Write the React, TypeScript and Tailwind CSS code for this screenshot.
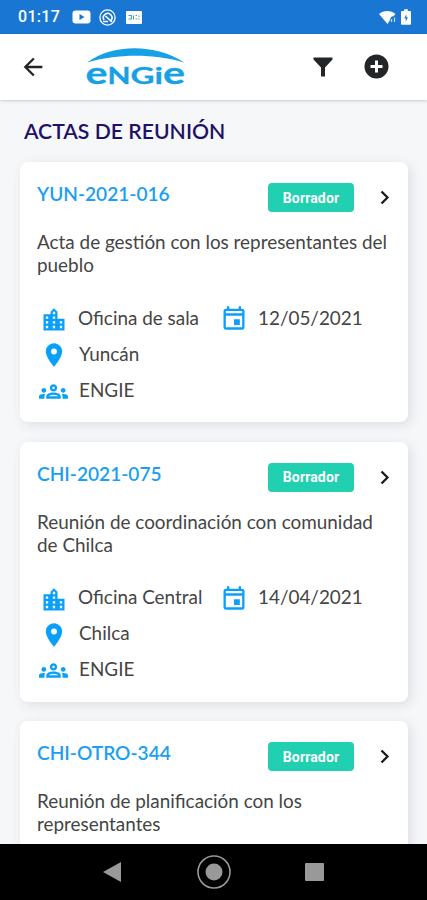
import type { ReactNode } from 'react'
import { MdArrowBack, MdLocationCity, MdLocationOn, MdOutlineEvent, MdOutlineGroups } from 'react-icons/md'

interface Acta {
  code: string
  description: string
  details?: {
    office: string
    date: string
    place: string
    company: string
  }
}

const actas: Acta[] = [
  {
    code: 'YUN-2021-016',
    description: 'Acta de gestión con los representantes del pueblo',
    details: { office: 'Oficina de sala', date: '12/05/2021', place: 'Yuncán', company: 'ENGIE' },
  },
  {
    code: 'CHI-2021-075',
    description: 'Reunión de coordinación con comunidad de Chilca',
    details: { office: 'Oficina Central', date: '14/04/2021', place: 'Chilca', company: 'ENGIE' },
  },
  {
    code: 'CHI-OTRO-344',
    description: 'Reunión de planificación con los representantes',
  },
]

function StatusBar() {
  return (
    <div className="flex h-[34px] shrink-0 items-center bg-[#1976d2] pl-[18px] pr-[16px] text-white">
      <span className="w-[54px] font-[Roboto,sans-serif] text-[16px] font-medium tracking-[0.3px]">01:17</span>
      <svg width="19" height="14" viewBox="0 0 19 14">
        <rect x="0.5" y="0.5" width="18" height="13" rx="3" fill="white" />
        <path d="M7.5 4v6l5-3z" fill="#1976d2" />
      </svg>
      <svg className="ml-[8px]" width="17" height="17" viewBox="0 0 17 17" fill="none" stroke="white">
        <circle cx="8.5" cy="8.5" r="7.600" strokeWidth="1.300" />
        <path d="M12 11.500A4.300 4.300 0 1 0 5 11M6.500 7l6.500 6M4 12.500h5" strokeWidth="1.600" />
      </svg>
      <svg className="ml-[10px]" width="16" height="13" viewBox="0 0 16 13">
        <rect width="16" height="13" rx="1" fill="white" />
        <path
          d="M2.500 4.500h3v3.500h-3M7.500 4.500v4M9.500 4.500h1.500M9.500 8h1.500M13 4.500v1.500M13 7.200v1.300"
          stroke="#1976d2"
          strokeOpacity="0.8"
          fill="none"
        />
      </svg>
      <svg className="ml-auto" width="17" height="15" viewBox="0 0 17 15">
        <path d="M0 4C4.500 0 12 0 16.500 4L14.500 6.300C12.500 6 11.300 7.500 11 10L8.500 14z" fill="white" />
        <path d="M12.500 12V9M15.500 12V7.500" stroke="white" strokeOpacity="0.7" strokeWidth="1.300" />
      </svg>
      <svg className="ml-[5px]" width="10" height="16" viewBox="0 0 11 17">
        <path d="M3.500 0h4v2H10q1 0 1 1v13q0 1-1 1H1q-1 0-1-1V3q0-1 1-1h2.500z" fill="white" />
        <path d="M6 5.500L3.500 10h1.700v3.500L7.700 9H6z" fill="#1976d2" />
      </svg>
    </div>
  )
}

// Lowercase letters are set larger so that they reach the height of the capitals
const logoLetters = [
  { char: 'e', x: 0.5, width: 22, size: 30 },
  { char: 'N', x: 22.5, width: 23, size: 22.5 },
  { char: 'G', x: 45.5, width: 24, size: 22.5 },
  { char: 'i', x: 69.5, width: 8.5, size: 22.5 },
  { char: 'e', x: 78, width: 22, size: 30 },
]

function Logo() {
  return (
    <svg className="ml-[38px]" width="102" height="48" viewBox="0 -4 102 48">
      <path d="M2 15.500C28-3.500 70-3.500 99.500 15.500C70 6.500 32 6.500 2 15.500z" fill="#16a0e6" />
      {logoLetters.map((l, idx) => (
        <text
          key={idx}
          x={l.x}
          y="36.500"
          fontSize={l.size}
          textLength={l.width}
          lengthAdjust="spacingAndGlyphs"
          fill="#16a0e6"
          stroke="#16a0e6"
          strokeWidth="0.3"
          className="font-[Lato,sans-serif] font-bold"
        >
          {l.char}
        </text>
      ))}
    </svg>
  )
}

function Header() {
  return (
    <header className="z-10 flex h-[66px] shrink-0 items-center bg-white pl-[19px] pr-[38px] text-[#222629] shadow-[0_1px_3px_rgba(0,0,0,0.18)]">
      <MdArrowBack size={28} />
      <Logo />
      <svg className="ml-auto" width="20" height="20" viewBox="0 0 20 20" fill="currentColor">
        <path d="M0.500 0.500h19v2L12 10.500v9H8v-9L0.500 2.500z" />
      </svg>
      <svg className="mb-[2px] ml-[31px]" width="25" height="25" viewBox="0 0 25 25">
        <circle cx="12.500" cy="12.500" r="12" fill="currentColor" />
        <path d="M12.500 6.500v12M6.500 12.500h12" stroke="white" strokeWidth="3" />
      </svg>
    </header>
  )
}

function DetailRow({ icon, children }: { icon: ReactNode; children: ReactNode }) {
  return (
    <div className="flex h-[36px] items-center">
      <span className="mr-[11px] w-[29px] text-[#0aa0fa]">{icon}</span>
      <span>{children}</span>
    </div>
  )
}

function ActaCard({ acta }: { acta: Acta }) {
  return (
    <article className="h-[260px] shrink-0 rounded-[8px] bg-white px-[17px] pt-[21px] text-[18.9px] text-[#454545] shadow-[3px_3px_12px_rgba(60,64,80,0.13)]">
      <div className="flex h-[29px]">
        <h2 className="text-[19.1px] leading-[22px] font-semibold text-[#1a9ff5]">{acta.code}</h2>
        <span className="ml-auto flex h-[29px] w-[86px] items-center justify-center rounded-[4px] bg-[#20d0b0] pt-px font-[Roboto,sans-serif] text-[14px] font-bold tracking-[0.15px] text-white">
          Borrador
        </span>
        <svg className="mt-[7px] mr-px ml-[26px]" width="10" height="15" viewBox="0 0 10 15" fill="none">
          <path d="M1.500 1.500l6 6-6 6" stroke="#1c1c1c" strokeWidth="2.300" />
        </svg>
      </div>
      <p className="mt-[18px] leading-[23px]">{acta.description}</p>
      {acta.details && (
        <div className="mt-[24px] ml-[2px]">
          <div className="flex">
            <div className="w-[181px]">
              <DetailRow icon={<MdLocationCity size={28} className="relative top-[2px] left-px" />}>
                <span className="relative -left-px">{acta.details.office}</span>
              </DetailRow>
            </div>
            <DetailRow icon={<MdOutlineEvent size={28} />}>
              <span className="relative -left-[2px]">{acta.details.date}</span>
            </DetailRow>
          </div>
          <DetailRow icon={<MdLocationOn size={28} className="relative top-px left-px" />}>{acta.details.place}</DetailRow>
          <DetailRow icon={<MdOutlineGroups size={29} className="relative top-px" />}>{acta.details.company}</DetailRow>
        </div>
      )}
    </article>
  )
}

function NavBar() {
  return (
    <nav className="z-10 flex h-[56px] shrink-0 items-center bg-black pl-[103px]">
      <svg width="18" height="20" viewBox="0 0 18 20">
        <path d="M18 0v20L0 10z" fill="#999" />
      </svg>
      <svg className="ml-[76px]" width="34" height="34" viewBox="0 0 34 34">
        <circle cx="17" cy="17" r="16" fill="none" stroke="#999" strokeWidth="1.600" />
        <circle cx="17" cy="17" r="8.500" fill="#999" />
      </svg>
      <span className="ml-[74px] h-[18px] w-[19px] rounded-[1px] bg-[#999]" />
    </nav>
  )
}

export default function App() {
  return (
    <div className="flex h-[900px] w-[427px] flex-col overflow-hidden bg-[#f5f7f9] font-[Lato,sans-serif]">
      <StatusBar />
      <Header />
      <main className="flex min-h-0 flex-1 flex-col overflow-hidden pr-[19px] pl-[20px]">
        <h1 className="ml-[4px] mt-[19px] mb-[19px] text-[21.2px] leading-[24px] font-semibold text-[#1d1168]">ACTAS DE REUNIÓN</h1>
        <div className="flex flex-col gap-[19.5px]">
          {actas.map(acta => (
            <ActaCard key={acta.code} acta={acta} />
          ))}
        </div>
      </main>
      <NavBar />
    </div>
  )
}
